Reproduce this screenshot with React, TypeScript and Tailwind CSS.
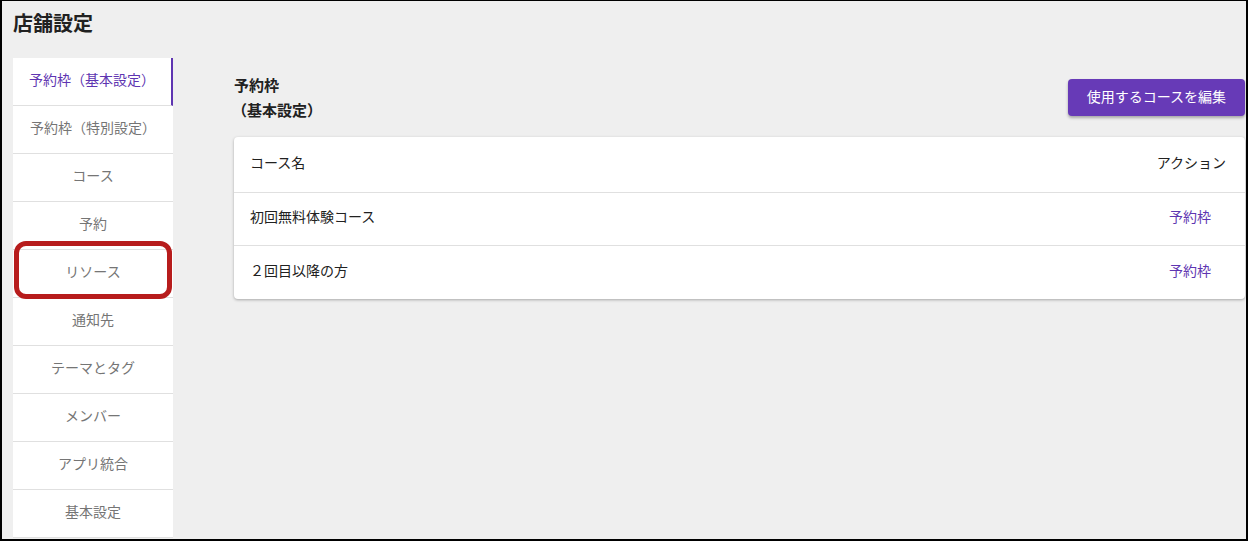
import React from "react";

const menuItems = [
	"予約枠（基本設定）",
	"予約枠（特別設定）",
	"コース",
	"予約",
	"リソース",
	"通知先",
	"テーマとタグ",
	"メンバー",
	"アプリ統合",
	"基本設定",
];

const courses = ["初回無料体験コース", "２回目以降の方"];

const App = () => {
	return (
		<div
			className="w-[1248px] h-[541px] bg-[#efefef] border-black border-t border-l-2 border-r-2 border-b-2 overflow-hidden text-[#212121]"
			style={{ fontFamily: '"Noto Sans CJK JP", "Noto Sans", sans-serif' }}
		>
			<h1 className="pl-[11px] pt-[8px] text-[20px] leading-[28px] font-bold text-[#212121]">店舗設定</h1>
			<div className="flex mt-[21px] pl-[11px]">
				{/* sidebar */}
				<nav className="relative w-[160px] shrink-0 bg-white">
					{menuItems.map((item, index) => (
						<div
							key={item}
							className={
								index === 0
									? "h-[48px] pb-[5px] flex items-center justify-center text-[14px] text-[#5e35b1] border-b border-[#e0e0e0] border-r-2 border-r-[#5e35b1]"
									: "h-[48px] pb-[5px] flex items-center justify-center text-[14px] text-[#757575] border-b border-[#e0e0e0]"
							}
						>
							{item}
						</div>
					))}
					<div className="absolute left-[1px] top-[183px] w-[158px] h-[58px] rounded-[12px] border-[5px] border-[#b71c1c]" />
				</nav>

				{/* main */}
				<main className="flex-1 pl-[61px] pr-[1px] pt-[14px]">
					<div className="flex justify-between items-start">
						<h2 className="text-[15px] leading-[25px] font-bold">
							予約枠
							<br />
							<span className="-ml-[2px]">（基本設定）</span>
						</h2>
						<button className="mt-[7px] h-[37px] px-[19px] pb-[2px] rounded-[4px] bg-[#673ab7] text-white text-[14px] shadow-[0_2px_3px_rgba(0,0,0,0.3)]">
							使用するコースを編集
						</button>
					</div>
					<div className="mt-[15px] bg-white rounded-[4px] shadow-[0_1px_3px_rgba(0,0,0,0.3)]">
						<div className="h-[56px] pb-[5px] flex items-center justify-between px-[16px] pr-[19px] text-[14px] border-b border-[#e0e0e0]">
							<span>コース名</span>
							<span>アクション</span>
						</div>
						{courses.map((course, index) => (
							<div
								key={course}
								className={
									index < courses.length - 1
										? "h-[53px] pb-[5px] flex items-center justify-between pl-[16px] pr-[34px] text-[14px] border-b border-[#e0e0e0]"
										: "h-[53px] pb-[5px] flex items-center justify-between pl-[16px] pr-[34px] text-[14px]"
								}
							>
								<span>{course}</span>
								<span className="text-[#5e35b1]">予約枠</span>
							</div>
						))}
					</div>
				</main>
			</div>
		</div>
	);
};

export default App;
